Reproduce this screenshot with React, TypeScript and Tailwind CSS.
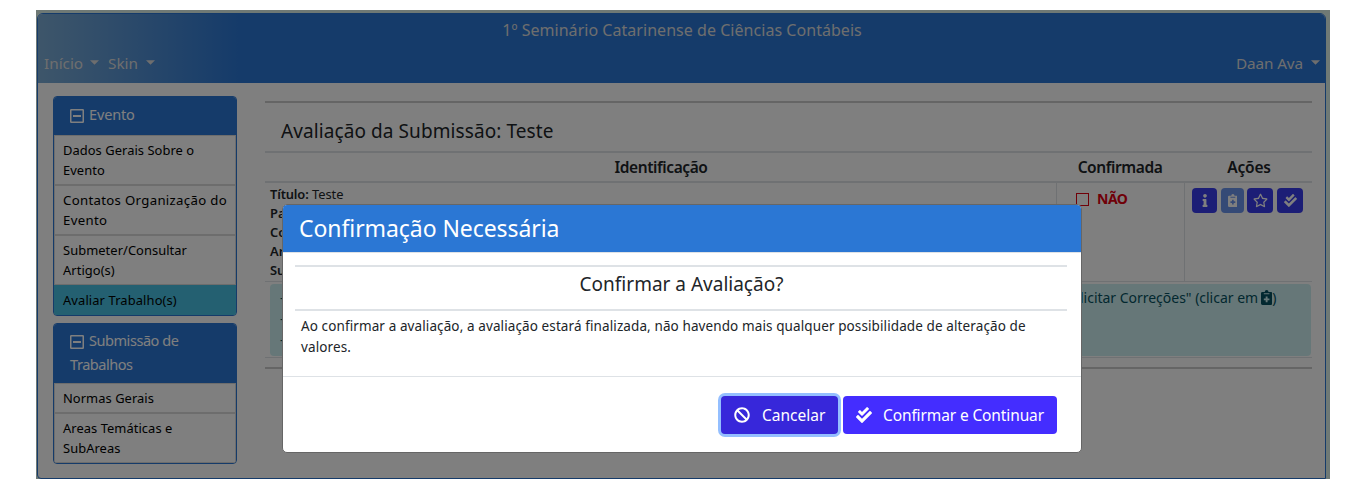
import React from "react";
import { FaInfo, FaRegStar, FaBan, FaCheckDouble } from "react-icons/fa";

const ClipboardPlus = ({ className }: { className: string }) => (
  <svg viewBox="0 0 12 16" className={className} fill="currentColor">
    <path fillRule="evenodd" d="M1.5 2H4a2 2 0 0 1 4 0h2.500A1.500 1.500 0 0 1 12 3.500v11a1.500 1.500 0 0 1-1.500 1.500h-9A1.500 1.500 0 0 1 0 14.500v-11A1.500 1.500 0 0 1 1.500 2zM3 3.500v1h6v-1zM5 7v2H3v2h2v2h2v-2h2V9H7V7z" />
  </svg>
);

const MinusBox = () => (
  <svg viewBox="0 0 14 14" className="mr-[5px] inline-block h-3.5 w-3.5 align-[-3px]" fill="none" stroke="currentColor">
    <rect x="0.75" y="0.75" width="12.5" height="12.5" rx="0.5" strokeWidth="1.5" />
    <path d="M3 7h8" strokeWidth="1.8" />
  </svg>
);

const Caret = ({ className }: { className: string }) => (
  <svg viewBox="0 0 10 5" className={"h-[5px] w-[9px] " + className} fill="currentColor">
    <path d="M0 0h10L5 5z" />
  </svg>
);

type Entry = { lines: string[]; active?: boolean; wide?: boolean };

function MenuCard({ title, entries, className, headClass }: { title: string[]; entries: Entry[]; className: string; headClass: string }) {
  return (
    <section className={"overflow-hidden rounded border border-[#2b77d4] bg-white " + className}>
      <h2 className={"bg-[#2b77d4] px-4 text-[14.500px] leading-6 text-white " + headClass}>
        {title.map((t, i) => (
          <span key={t} className="block whitespace-nowrap">
            {i === 0 && <MinusBox />}
            {t}
          </span>
        ))}
      </h2>
      <ul className="text-[12.900px] leading-5 tracking-[0.06px] text-black">
        {entries.map((e) => (
          <li
            key={e.lines[0]}
            className={
              e.active
                ? "border border-[#48c0e2] bg-[#48c0e2] px-2 py-1 tracking-[0.12px]"
                : "border border-[#dadada] px-2 py-1"
            }
          >
            {e.lines.map((l) => (
              <span key={l} className={"block whitespace-nowrap " + (e.wide ? "text-[13.200px] tracking-[0.32px]" : "")}>{l}</span>
            ))}
          </li>
        ))}
      </ul>
    </section>
  );
}

export default function App() {
  return (
    <div className="h-[490px] w-[1366px] overflow-hidden bg-white pt-[10px] pl-9 font-['Noto_Sans',sans-serif] text-[#212529]">
      <div className="relative h-[469px] w-[1294px] bg-[#dff2ea] pt-[3px] pl-px">
        <div className="h-[466px] w-[1289px] overflow-hidden rounded-t-md rounded-bl border border-[#2b77d4] bg-white">
          <header className="flex h-[69px] flex-col bg-[linear-gradient(90deg,#7cacd4_0px,#2b77d4_200px)] text-[15.300px] text-[#ddd]">
            <div className="pt-1 pl-px text-center text-[16px] leading-6 tracking-[0.04px]">1º Seminário Catarinense de Ciências Contábeis</div>
            <nav className="mt-[8px] flex items-center pl-[6px] leading-6">
              <span className="w-[38px] whitespace-nowrap">Início</span>
              <Caret className="ml-2" />
              <span className="ml-[9px] w-[30px]">Skin</span>
              <Caret className="ml-2" />
              <span className="ml-auto pt-px tracking-[-0.1px]">Daan Ava</span>
              <Caret className="mr-[5px] ml-2" />
            </nav>
          </header>
          <div className="flex">
            <aside className="w-[184px] shrink-0 pt-[13px] ml-[15px]">
              <MenuCard
                className="h-[220px]"
                headClass="pt-[5px] pb-[9px] tracking-[-0.15px]"
                title={["Evento"]}
                entries={[
                  { lines: ["Dados Gerais Sobre o", "Evento"] },
                  { lines: ["Contatos Organização do", "Evento"], wide: true },
                  { lines: ["Submeter/Consultar", "Artigo(s)"] },
                  { lines: ["Avaliar Trabalho(s)"], active: true },
                ]}
              />
              <MenuCard
                className="mt-[7px] h-[141px]"
                headClass="pt-[4px] pb-[7px] tracking-[-0.45px]"
                title={["Submissão de", "Trabalhos"]}
                entries={[{ lines: ["Normas Gerais"] }, { lines: ["Areas Temáticas e", "SubAreas"] }]}
              />
            </aside>
            <main className="ml-7 w-[1047px] pt-[18px]">
              <div className="h-[268px] border-y-2 border-[#cbcbcb]">
                <h1 className="h-12 pt-[13px] pl-4 text-[19px] leading-[30px] tracking-[0.09px]">Avaliação da Submissão: Teste</h1>
                <div className="flex h-8 items-center border-y-2 border-[#dee2e6] pt-px text-[15.500px] font-semibold tracking-[-0.42px]">
                  <div className="w-[791px] pl-px text-center">Identificação</div>
                  <div className="w-[128px] text-center">Confirmada</div>
                  <div className="w-[128px] pl-0.5 text-center tracking-[-0.2px]">Ações</div>
                </div>
                <div className="flex h-[99px] border-b border-[#dee2e6]">
                  <div className="w-[791px] pt-[2px] pl-[5px] text-[12.900px] leading-[19px]">
                    <p><b className="font-semibold tracking-[-0.15px]">Título:</b> Teste</p>
                    {["Pa", "Co", "Ar", "Su"].map((s) => <p key={s} className="font-semibold">{s}</p>)}
                  </div>
                  <div className="flex w-[128px] gap-2 border-l border-[#dee2e6] pt-[5px] pl-[19px] text-[14px] leading-[21px] font-bold tracking-[-0.5px] text-[#e00010]">
                    <span className="mt-[5px] h-[13px] w-[13px] border-[1.5px] border-[#e00010]" />
                    NÃO
                  </div>
                  <div className="flex w-[128px] border-l border-[#dee2e6] pt-[5px] pl-[7px] text-white">
                    <span className="flex h-[25px] w-[25px] items-center justify-center rounded bg-[#393cec]"><FaInfo className="h-[13px]" /></span>
                    <span className="ml-1 flex h-[25px] w-[23px] items-center justify-center rounded bg-[#6a94ec]"><ClipboardPlus className="h-[13px]" /></span>
                    <span className="ml-[3px] flex h-[25px] w-[26px] items-center justify-center rounded bg-[#393cec]"><FaRegStar className="h-[15px] w-[15px]" /></span>
                    <span className="ml-1 flex h-[25px] w-[26px] items-center justify-center rounded bg-[#393cec]"><FaCheckDouble className="h-[13px] w-[13px]" /></span>
                  </div>
                </div>
                <div className="flex h-[76px] border-b border-[#dee2e6] pt-[2px] pl-[5px]">
                  <div className="flex h-[72px] w-[1041px] rounded bg-[#cdeff1] pt-[3px] pl-[10px] text-[14px] leading-[21px] text-[#055160]">
                    <div className="w-[800px]">{[0, 1, 2].map((n) => <p key={n}>-</p>)}</div>
                    <div className="flex h-[21px] items-center whitespace-nowrap tracking-[-0.02px]">
                      <span>licitar Correções" (clicar em </span>
                      <ClipboardPlus className="ml-[3px] h-[15px]" />
                      <span>)</span>
                    </div>
                  </div>
                </div>
              </div>
            </main>
          </div>
        </div>
        <div className="absolute inset-0 bg-black/50" />
        <div role="dialog" className="absolute top-[194px] left-[246px] h-[249px] w-[800px] overflow-hidden rounded-[5px] border border-[#666] bg-white">
          <div className="h-[48px] border-b border-[#dee2e6] bg-[#2b77d4] pl-4 text-[23px] leading-[47px] tracking-[-0.07px] text-white">Confirmação Necessária</div>
          <div className="h-[123px] pt-3 pr-[14px] pl-3">
            <h3 className="h-[46px] border-y-2 border-[#dee2e6] pl-px text-center text-[19px] leading-[34px]">Confirmar a Avaliação?</h3>
            <p className="pt-[5px] pl-[6px] text-[13.500px] leading-[21px] tracking-[0.105px] whitespace-nowrap">
              Ao confirmar a avaliação, a avaliação estará finalizada, não havendo mais qualquer possibilidade de alteração de
              <br />
              valores.
            </p>
          </div>
          <div className="flex justify-end gap-[5px] border-t border-[#dee2e6] pt-[19px] pr-6 text-[15.500px] text-white">
            <button className="flex h-[38px] w-[117px] items-center rounded bg-[#3727da] pl-[13px] ring-[3px] ring-[#94bfff]">
              <FaBan className="h-4 w-4" />
              <span className="ml-3 pt-px">Cancelar</span>
            </button>
            <button className="flex h-[38px] w-[214px] items-center rounded bg-[#442dff] pl-[13px]">
              <FaCheckDouble className="h-4 w-4" />
              <span className="ml-[11px] pt-px tracking-[-0.12px] whitespace-nowrap">Confirmar e Continuar</span>
            </button>
          </div>
        </div>
      </div>
    </div>
  );
}
